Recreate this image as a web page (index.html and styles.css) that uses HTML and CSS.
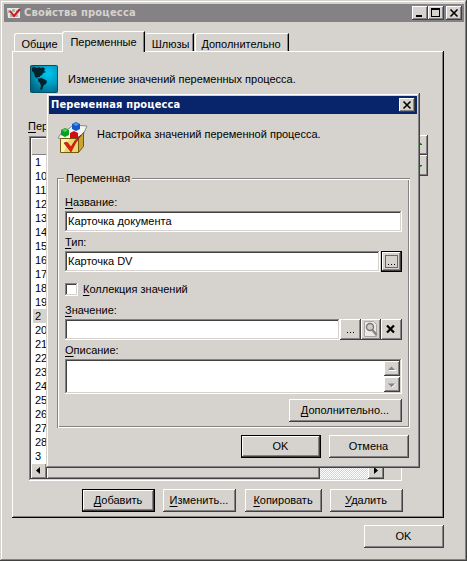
FILE: index.html
```
<!DOCTYPE html>
<html lang="ru">
<head>
<meta charset="utf-8">
<title>Свойства процесса</title>
<link rel="stylesheet" href="styles.css">
</head>
<body>
<div class="window main">
  <div class="titlebar inactive">
    <svg class="app-icon" width="14" height="12" viewBox="0 0 14 12"><path fill="#e8e6e3" d="M0 1h13v10H1z"/><path fill="#b5b2ad" d="M1 3h3v3H1zM5 2h3v3H5zM9 3h3v3H9zM3 7h8v3H3z"/><path fill="none" stroke="#d01818" stroke-width="2" d="M3 4l4 5 6-7"/></svg>
    <span class="title t-main">Свойства процесса</span>
    <button class="cap raised"><svg width="15" height="14"><path d="M4 9h6v2H4z"/></svg></button>
    <button class="cap raised"><svg width="15" height="14"><path fill-rule="evenodd" d="M3 2h9v9H3zM4 4v6h7V4z"/></svg></button>
    <button class="cap raised close"><svg width="16" height="14"><path fill="none" stroke="#000" stroke-width="1.6" d="M4.500 3.500l7 7M11.500 3.500l-7 7"/></svg></button>
  </div>
  <div class="tabs">
    <div class="tab tab1"><span>Общие</span></div>
    <div class="tab tab2"><span>Переменные</span></div>
    <div class="tab tab3"><span>Шлюзы</span></div>
    <div class="tab tab4"><span>Дополнительно</span></div>
  </div>
  <div class="page">
    <div class="intro">
      <svg width="28" height="28" viewBox="0 0 28 28"><defs><radialGradient id="sea" cx=".65" cy=".3" r=".8"><stop offset="0" stop-color="#00c8f4"/><stop offset=".55" stop-color="#0098bd"/><stop offset="1" stop-color="#006280"/></radialGradient></defs><rect x=".5" y=".5" width="27" height="27" rx="1" fill="url(#sea)" stroke="#005067"/><path fill="#04222c" d="M2 3l2-1 3 1 2-1 2 1 2-1 2 2-1 2 2 1-3 1-1 2-2 1v1H7l1 1 2 1 1 1-2-1-4-2-1-4-2-2zM8 14l3-1 3 1 3 2-1 3-2 1-1 2-1 3-2-1 1-3-1-3-2-2z"/></svg>
      <span class="t-intro">Изменение значений переменных процесса.</span>
    </div>
    <div class="list-label"><u>П</u>еременные:</div>
    <div class="list-row">
      <div class="list">
        <div class="list-head"></div>
        <ul class="rows">
          <li>1</li><li>10</li><li>11</li><li>12</li><li>13</li><li>14</li><li>15</li><li>16</li><li>17</li><li>18</li><li>19</li><li class="sel"><span>2</span></li><li>20</li><li>21</li><li>22</li><li>23</li><li>24</li><li>25</li><li>26</li><li>27</li><li>28</li><li>3</li>
        </ul>
        <div class="hscroll">
          <div class="arrow raised"><svg width="16" height="16"><path d="M9 4v7L5 7.500z"/></svg></div>
          <div class="thumb raised"></div>
          <div class="track"></div>
          <div class="arrow raised"><svg width="16" height="16"><path d="M6 4v7l4-3.500z"/></svg></div>
        </div>
      </div>
      <div class="movers">
        <div class="raised"><svg width="26" height="20"><path fill="#008200" d="M12 4l8 5v1h-2L12 8z"/></svg></div>
        <div class="raised"><svg width="26" height="20"><path fill="#008200" d="M12 15l8-4v-1h-2l-6 2z"/></svg></div>
      </div>
    </div>
    <div class="actions">
      <button class="btn raised default a1"><span><u>Д</u>обавить</span></button>
      <button class="btn raised a2"><span><u>И</u>зменить...</span></button>
      <button class="btn raised a3"><span><u>К</u>опировать</span></button>
      <button class="btn raised a4"><span><u>У</u>далить</span></button>
    </div>
  </div>
  <div class="footer"><button class="btn raised wide"><span>OK</span></button></div>
</div>

<div class="window dialog">
  <div class="titlebar active">
    <span class="title t-dialog">Переменная процесса</span>
    <button class="cap raised close"><svg width="16" height="14"><path fill="none" stroke="#000" stroke-width="1.6" d="M4.500 3.500l7 7M11.500 3.500l-7 7"/></svg></button>
  </div>
  <div class="dialog-intro">
    <svg width="31" height="32" viewBox="0 0 31 32"><path fill="#f4f4f4" stroke="#8a8a8a" d="M1 16l4-6 8-4 3-3 14 1-4 9-12 5z"/><path fill="#ecd673" stroke="#6e5c14" d="M3.500 16.500h18v14h-18z"/><path fill="#c9a52f" stroke="#6e5c14" d="M21.500 16.500l5-6v14l-5 6z"/><path fill="#fff0a5" d="M4 17h8l-5 13H4z"/><path fill="#d40c0c" d="M13 11l4-2 4 2v5h-8z"/><path fill="#08a01c" d="M4 8l4-2 4 2v5l-4 2-4-2z"/><path fill="#4fd45c" d="M5 8l3-1 3 1-3 2z"/><path fill="#1458c8" d="M15 2l4-2 4 2v5l-4 2-4-2z"/><path fill="#4c9bfa" d="M16 2l3-1 3 1-3 2z"/><path fill="#e61c10" stroke="#96130c" stroke-width=".6" d="M7 21l3-1 4 5q4-8 10-12-6 8-10 17z"/></svg>
    <span class="t-dintro">Настройка значений переменной процесса.</span>
  </div>
  <fieldset class="group">
    <legend><span>Переменная</span></legend>
    <label class="lbl l1"><u>Н</u>азвание:</label>
    <div class="field"><span class="t-doc">Карточка документа</span></div>
    <label class="lbl l2"><u>Т</u>ип:</label>
    <div class="line">
      <div class="field type"><span>Карточка DV</span></div>
      <button class="mini raised default"><svg width="21" height="21"><rect x="4.500" y="4.500" width="12" height="12" fill="none" stroke="#000" stroke-dasharray="1 1"/><path d="M7 13h1v1H7zM10 13h1v1h-1zM13 13h1v1h-1z"/></svg></button>
    </div>
    <div class="check"><i class="box"></i><span><u>К</u>оллекция значений</span></div>
    <label class="lbl l3"><u>З</u>начение:</label>
    <div class="line value">
      <div class="field"></div>
      <button class="mini raised"><svg width="21" height="21"><path d="M7 13h1v1H7zM10 13h1v1h-1zM13 13h1v1h-1z"/></svg></button>
      <button class="mini raised"><svg width="20" height="21"><path fill="#ece9e6" stroke="#a9a6a3" d="M3.500 2.500h9l3 3v12h-12z"/><circle cx="9" cy="8" r="3.500" fill="#d0ceca" stroke="#777" stroke-width="1.400"/><path stroke="#888" stroke-width="2.500" d="M11.500 11l4 5"/></svg></button>
      <button class="mini raised"><svg width="21" height="21"><path fill="none" stroke="#000" stroke-width="2.300" d="M6 6.500l7 7M13 6.500l-7 7"/></svg></button>
    </div>
    <label class="lbl l4"><u>О</u>писание:</label>
    <div class="field area">
      <div class="vscroll">
        <div class="raised"><svg width="16" height="15"><path fill="#fff" d="M5 9h7v1H5z"/><path fill="#848284" d="M4 9h7L7.500 5.500z"/></svg></div>
        <div class="raised"><svg width="16" height="15"><path fill="#fff" d="M8 11l4-4h-1l-3 3z"/><path fill="#848284" d="M4 6.500h7L7.500 10z"/></svg></div>
      </div>
    </div>
    <button class="btn raised more"><span><u>Д</u>ополнительно...</span></button>
  </fieldset>
  <div class="dialog-actions">
    <button class="btn raised default wide"><span>OK</span></button>
    <button class="btn raised wide"><span>Отмена</span></button>
  </div>
</div>
</body>
</html>
```
FILE: styles.css
```
* { box-sizing: border-box; }
body {
  margin: 0;
  width: 467px;
  height: 561px;
  overflow: hidden;
  position: relative;
  background: #d6d3ce;
  color: #000;
  font: 11px/14px "Liberation Sans", Arial, sans-serif;
  white-space: nowrap;
}
svg { display: block; flex: none; }
button { padding: 0; border: 0; margin: 0; font: inherit; color: inherit; }
u { text-decoration: underline; text-underline-offset: 2px; text-decoration-thickness: 1px; text-decoration-skip-ink: none; }

.window {
  background: #d6d3ce;
  box-shadow: inset -1px -1px #424142, inset 1px 1px #d6d3ce, inset -2px -2px #848284, inset 2px 2px #fff;
}
.main { width: 467px; height: 561px; padding: 4px 3px 0 4px; }
.raised {
  background: #d6d3ce;
  box-shadow: inset -1px -1px #424142, inset 1px 1px #fff, inset -2px -2px #848284;
}
.raised.default { border: 1px solid #000; }

.titlebar { display: flex; align-items: center; height: 18px; }
.inactive { background: #848284; color: #d6d3ce; padding: 0 2px 0 3px; }
.active { background: #08246b; color: #fff; padding: 0 2px; }
.title { flex: 1; font: bold 11px/18px "DejaVu Sans Condensed", "DejaVu Sans", sans-serif; }
.t-main { letter-spacing: .2px; }
.t-dialog { letter-spacing: .13px; }
.app-icon { margin-right: 3px; }
.cap { width: 16px; height: 14px; }
.cap.close { margin-left: 2px; }
.active .close { margin-left: 0; }

.tabs { display: flex; align-items: flex-end; height: 29px; margin-left: 10px; }
.tab {
  height: 18px;
  border-top: 1px solid #fff;
  border-left: 1px solid #fff;
  border-top-left-radius: 3px;
  text-align: center;
  line-height: 20px;
}
.tab1 { width: 48px; padding-left: 2px; }
.tab2 { position: relative; z-index: 1; width: 83px; height: 21px; margin-bottom: -1px; background: #d6d3ce; border-right: 1px solid #000; box-shadow: inset -1px 0 #848284; }
.tab3 { width: 49px; padding-left: 3px; border-left: 0; border-right: 1px solid #000; box-shadow: inset -1px 0 #848284; }
.tab4 { width: 94px; margin-left: 1px; border-right: 1px solid #000; box-shadow: inset -1px 0 #848284; }
.tab4 span { margin-left: -2px; }

.page {
  width: 432px;
  height: 467px;
  margin-left: 8px;
  padding: 14px 0 0 17px;
  box-shadow: inset -1px -1px #000, inset 1px 1px #fff, inset -2px -2px #848284;
}
.intro { display: flex; align-items: center; gap: 10px; height: 28px; margin-left: 1px; }
.list-label { margin: 26px 0 0 -1px; line-height: 15px; }
.list-row { display: flex; margin-top: 2px; }
.list {
  width: 373px;
  height: 345px;
  padding: 2px;
  box-shadow: inset -1px -1px #fff, inset 1px 1px #848284, inset -2px -2px #d6d3ce, inset 2px 2px #424142;
}
.list-head { height: 17px; box-shadow: inset 1px 1px #fff, inset 0 -1px #848284; }
.rows { margin: 0; padding: 0 0 0 2px; list-style: none; background: #fff; height: 308px; }
.rows li { height: 14px; padding-left: 2px; }
.rows .sel { width: 14px; background: #d6d3ce; }
.hscroll { display: flex; width: 353px; height: 16px; }
.arrow { width: 16px; height: 16px; }
.thumb { width: 273px; }
.track { flex: 1; background: repeating-conic-gradient(#fff 0 25%, #d6d3ce 0 50%) 0 0 / 2px 2px; }
.movers { display: flex; flex-direction: column; width: 26px; margin-top: -1px; }
.movers div { height: 20px; }
.movers div + div { height: 21px; }

.actions { display: flex; margin: 8px 0 0 53px; }
.btn { display: flex; align-items: center; justify-content: center; height: 23px; padding: 0 1px 1px 0; }
.a1, .a2, .a4 { width: 73px; }
.a2 { margin-left: 8px; }
.a3 { width: 77px; margin-left: 9px; }
.a4 { margin-left: 8px; }
.wide { width: 80px; }
.footer { margin: 7px 0 0 360px; }

.dialog { position: absolute; left: 46px; top: 93px; width: 374px; height: 375px; padding: 3px; }
.dialog-intro { display: flex; height: 32px; margin: 8px 0 0 8px; gap: 9px; }
.dialog-intro span { line-height: 25px; }
.group {
  position: relative;
  width: 353px;
  height: 250px;
  margin: 24px 0 0 8px;
  padding: 0 8px;
  border: 0;
  min-width: 0;
  box-shadow: inset 1px 1px #848284, inset -1px -1px #fff, inset 2px 2px #fff, inset -2px -2px #848284;
}
.group legend { float: left; padding: 0 2px; margin: -7px 0 0 -1px; background: #d6d3ce; height: 14px; }
.lbl { display: block; clear: both; height: 14px; }
.group legend + .l1 { padding-top: 10px; height: 26px; }
.field {
  flex: 1;
  height: 21px;
  padding: 0 3px;
  line-height: 20px;
  background: #fff;
  box-shadow: inset -1px -1px #fff, inset 1px 1px #848284, inset -2px -2px #d6d3ce, inset 2px 2px #424142;
}
.t-doc { letter-spacing: .05px; }
.l2 { margin-top: 3px; height: 16px; }
.line { display: flex; }
.type { margin-right: 1px; }
.mini { width: 21px; height: 21px; }
.mini.default svg { margin: -1px; }
.check { display: flex; align-items: center; height: 14px; margin-top: 10px; gap: 5px; }
.box { width: 13px; height: 13px; background: #fff; box-shadow: inset -1px -1px #fff, inset 1px 1px #848284, inset -2px -2px #d6d3ce, inset 2px 2px #424142; }
.l3 { margin-top: 7px; height: 16px; }
.value .field { flex: none; width: 275px; }
.value .mini:nth-child(3) { width: 20px; }
.l4 { margin-top: 3px; height: 16px; }
.area { display: flex; justify-content: flex-end; height: 35px; padding: 2px; }
.vscroll { display: flex; flex-direction: column; width: 16px; gap: 1px; }
.vscroll div { height: 15px; }
.more { width: 113px; margin: 5px 0 0 auto; }
.dialog-actions { display: flex; justify-content: flex-end; gap: 8px; margin: 7px 8px 0 0; }
```
